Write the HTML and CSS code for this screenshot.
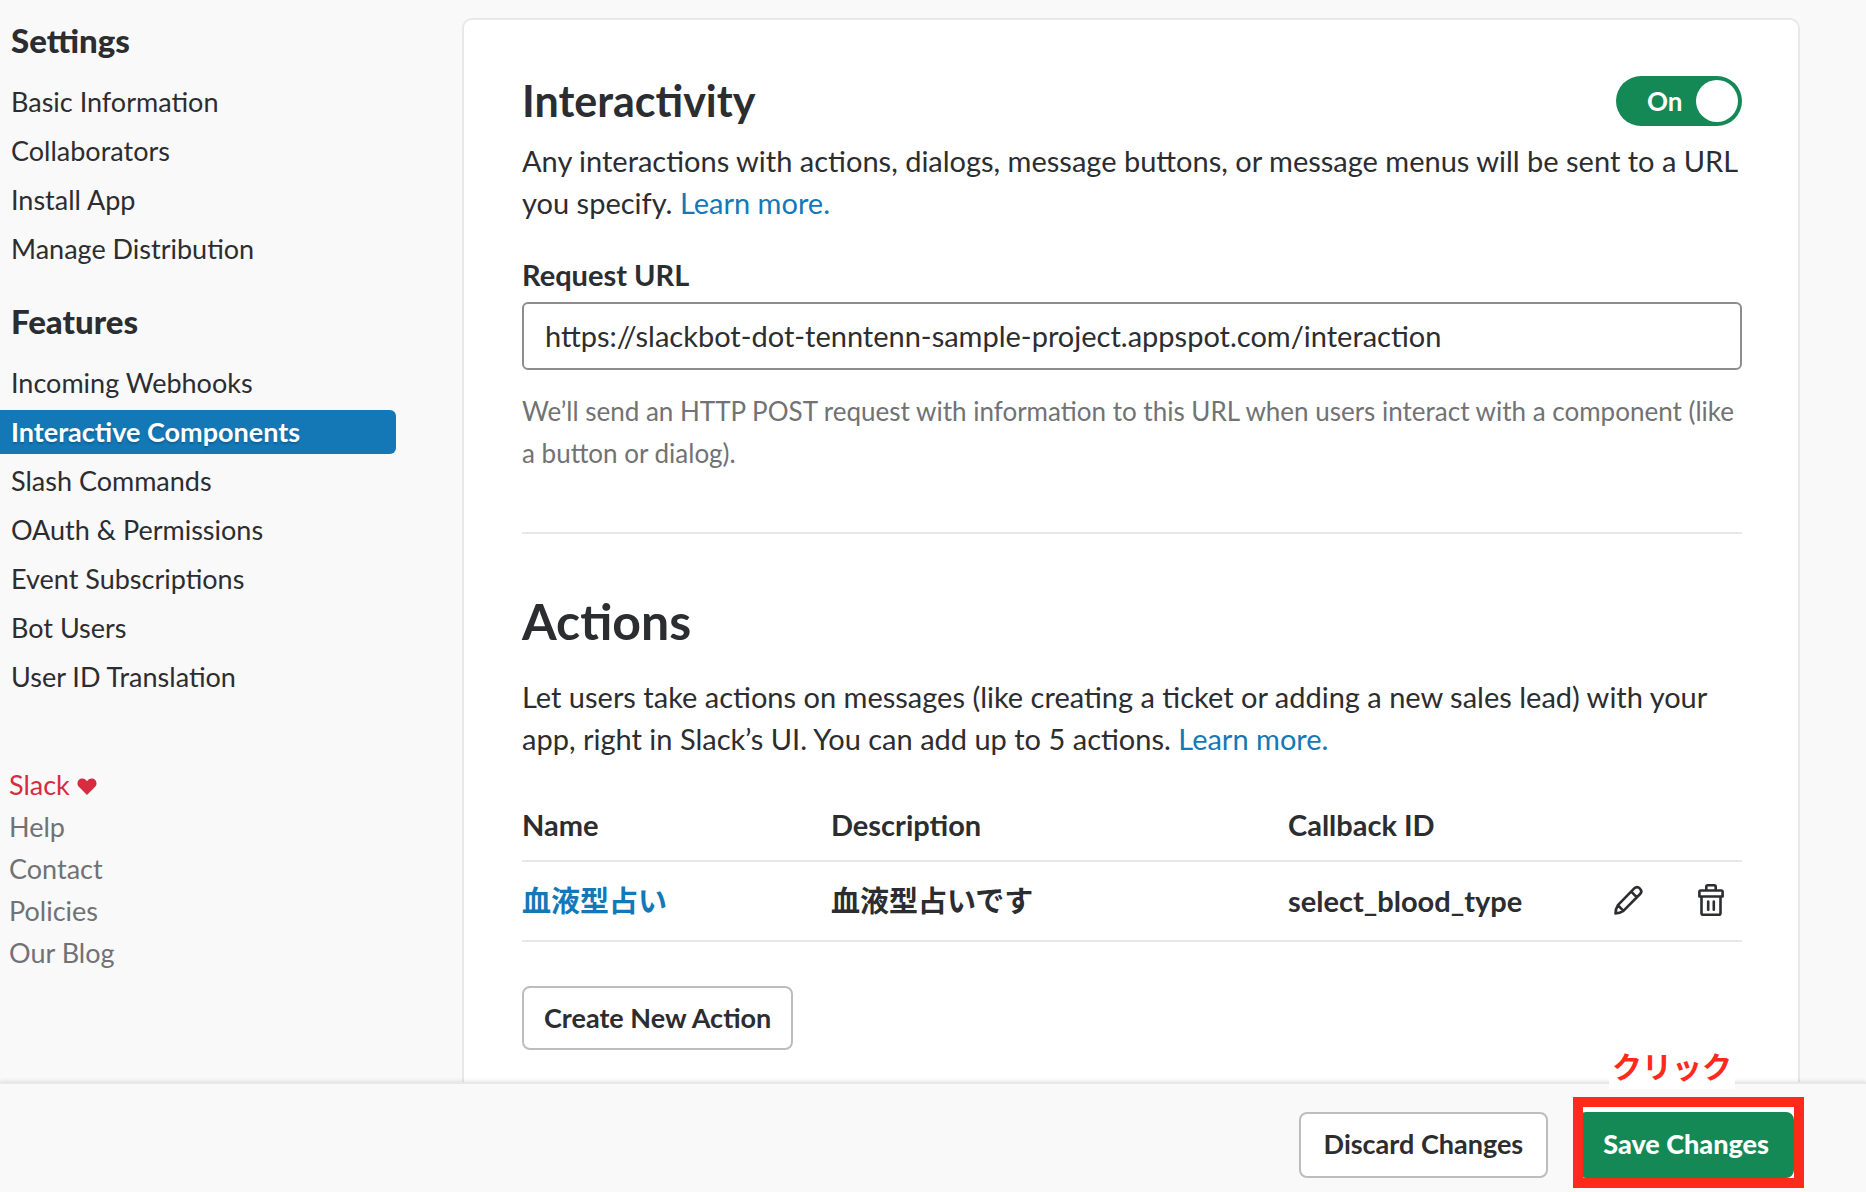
FILE: index.html
```html
<!DOCTYPE html>
<html lang="en">
<head>
<meta charset="utf-8">
<meta name="viewport" content="width=device-width, initial-scale=1">
<title>Interactive Components</title>
<link rel="stylesheet" href="styles.css">
</head>
<body>
<div class="page">
  <div class="layout">
    <aside class="sidebar">
      <nav class="nav" aria-label="App configuration">
        <h3 class="nav-title">Settings</h3>
        <ul class="nav-list">
          <li><a class="nav-link" href="#">Basic Information</a></li>
          <li><a class="nav-link" href="#">Collaborators</a></li>
          <li><a class="nav-link" href="#">Install App</a></li>
          <li><a class="nav-link" href="#">Manage Distribution</a></li>
        </ul>
        <h3 class="nav-title">Features</h3>
        <ul class="nav-list">
          <li><a class="nav-link" href="#">Incoming Webhooks</a></li>
          <li><a class="nav-link nav-link-active" href="#" aria-current="page">Interactive Components</a></li>
          <li><a class="nav-link" href="#">Slash Commands</a></li>
          <li><a class="nav-link" href="#">OAuth &amp; Permissions</a></li>
          <li><a class="nav-link" href="#">Event Subscriptions</a></li>
          <li><a class="nav-link" href="#">Bot Users</a></li>
          <li><a class="nav-link" href="#">User ID Translation</a></li>
        </ul>
      </nav>
      <ul class="side-links">
        <li><a class="side-link side-link-love" href="#">Slack
          <svg class="heart" viewBox="0 0 20 17" aria-hidden="true"><path d="M10 17 1.6 8.6A5.2 5.2 0 0 1 .5 5.5C.5 2.5 2.6.5 5.3.5 7.4.5 9 1.6 10 3.3 11 1.6 12.6.5 14.7.5c2.7 0 4.8 2 4.8 5 0 1.2-.4 2.3-1.1 3.1z"/></svg></a></li>
        <li><a class="side-link" href="#">Help</a></li>
        <li><a class="side-link" href="#">Contact</a></li>
        <li><a class="side-link" href="#">Policies</a></li>
        <li><a class="side-link" href="#">Our Blog</a></li>
      </ul>
    </aside>

    <main class="card">
      <section>
        <div class="section-head">
          <h2 class="title">Interactivity</h2>
          <label class="toggle">
            <input class="toggle-input" type="checkbox" role="switch" aria-label="Interactivity" checked>
            <span class="toggle-text">On</span>
            <span class="toggle-knob"></span>
          </label>
        </div>
        <p class="text">Any interactions with actions, dialogs, message buttons, or message menus will be sent to a URL you specify. <a class="link" href="#">Learn more.</a></p>
        <label class="field-label" for="request-url">Request URL</label>
        <input class="field" id="request-url" type="text" value="https://slackbot-dot-tenntenn-sample-project.appspot.com/interaction">
        <p class="hint">We’ll send an HTTP POST request with information to this URL when users interact with a component (like a button or dialog).</p>
      </section>

      <hr class="rule">

      <section>
        <h1 class="title title-large">Actions</h1>
        <p class="text">Let users take actions on messages (like creating a ticket or adding a new sales lead) with your app, right in Slack’s UI. You can add up to 5 actions. <a class="link" href="#">Learn more.</a></p>
        <table class="actions">
          <colgroup>
            <col class="col-name"><col class="col-desc"><col class="col-id"><col class="col-tools">
          </colgroup>
          <thead>
            <tr><th scope="col">Name</th><th scope="col">Description</th><th scope="col">Callback ID</th><th></th></tr>
          </thead>
          <tbody>
            <tr>
              <td lang="ja"><a class="link" href="#">血液型占い</a></td>
              <td lang="ja">血液型占いです</td>
              <td>select_blood_type</td>
              <td>
                <div class="tools">
                  <button class="icon-button" type="button" aria-label="Edit">
                    <svg class="icon" viewBox="0 0 36 36" aria-hidden="true"><path d="M4.5 31.400c0-3 .9-6 2.400-8.200L23.500 6.200c1.500-1.500 3.600-1.500 5 0l.6.600c1.500 1.500 1.500 3.600 0 5.200L12.400 28.900c-2.200 1.500-5 2.500-7.900 2.500zM6.900 23.200l5.500 5.700M20.300 9.700l5.600 5.600"/></svg>
                  </button>
                  <button class="icon-button" type="button" aria-label="Delete">
                    <svg class="icon" viewBox="0 0 36 36" aria-hidden="true"><path d="M8.500 14.500V31c0 1 .7 1.800 1.700 1.800h15.600c1 0 1.700-.8 1.700-1.800V14.500M7.700 8.500h20.600c.8 0 1.300.5 1.300 1.300v4.700H6.400V9.800c0-.8.500-1.300 1.300-1.300zM13.300 8.500V4.800c0-1 .6-1.500 1.500-1.500h6.400c.9 0 1.500.5 1.500 1.500v3.700M15.200 19.500v8.200M20.800 19.500v8.200"/></svg>
                  </button>
                </div>
              </td>
            </tr>
          </tbody>
        </table>
        <button class="button button-create" type="button">Create New Action</button>
      </section>
    </main>
  </div>

  <footer class="save-bar">
    <button class="button button-bar" type="button">Discard Changes</button>
    <div class="callout">
      <button class="button button-bar button-primary" type="button">Save Changes</button>
      <span class="callout-frame"></span>
      <span class="callout-label" lang="ja">クリック</span>
    </div>
  </footer>
</div>
</body>
</html>
```
FILE: styles.css
```css
* {
  box-sizing: border-box;
}

body {
  margin: 0;
  background: #f9f9f9;
  color: #2c2d30;
  font-family: Lato, "Noto Sans CJK JP", sans-serif;
  font-size: 29px;
  line-height: 42px;
}

h1, h2, h3, p, ul {
  margin: 0;
  padding: 0;
}

ul {
  list-style: none;
}

a {
  text-decoration: none;
}

button, input {
  font: inherit;
  color: inherit;
}

.page {
  display: flex;
  flex-direction: column;
  min-height: 100vh;
}

.layout {
  flex: 1;
  display: flex;
  align-items: stretch;
  padding: 18px 66px 0 0;
}

/* Sidebar */
.sidebar {
  flex: 0 0 462px;
  padding-right: 66px;
  font-size: 27px;
}

.nav-title {
  padding: 0 11px 18px;
  font-size: 33px;
  font-weight: 900;
  line-height: 44px;
}

.nav-list {
  display: flex;
  flex-direction: column;
  gap: 5px;
  margin-bottom: 28px;
}

.nav-link {
  display: block;
  padding: 0 11px;
  color: #2c2d30;
  line-height: 44px;
}

.nav-link-active {
  border-radius: 0 6px 6px 0;
  background: #1478b7;
  color: #fff;
  font-weight: 700;
  text-shadow: 0 2px 2px rgba(0, 0, 0, 0.2);
}

.side-links {
  margin-top: 65px;
  padding-left: 9px;
}

.side-link {
  color: #717274;
}

.side-link-love {
  color: #d72b3f;
}

.heart {
  width: 20px;
  height: 17px;
  fill: #d72b3f;
}

/* Main card */
.card {
  flex: 1;
  min-width: 0;
  padding: 56px 56px 32px 58px;
  border: 2px solid #e8e8e8;
  border-bottom: 0;
  border-radius: 10px 10px 0 0;
  background: #fff;
}

.section-head {
  display: flex;
  align-items: center;
  justify-content: space-between;
  margin-bottom: 14px;
}

.title {
  font-size: 43px;
  font-weight: 700;
  line-height: 48px;
}

.title-large {
  margin-bottom: 25px;
  font-size: 50px;
  line-height: 60px;
}

.link {
  color: #1478b7;
}

.field-label {
  display: block;
  margin: 30px 0 6px;
  font-weight: 700;
}

.field {
  display: block;
  width: 100%;
  height: 68px;
  padding: 0 21px 2px;
  border: 2px solid #8d8d8f;
  border-radius: 6px;
  background: #fff;
}

.hint {
  margin-top: 20px;
  color: #717274;
  font-size: 26px;
}

.rule {
  height: 2px;
  margin: 58px 0 57px;
  border: 0;
  background: #e8e8e8;
}

.toggle {
  position: relative;
  display: flex;
  align-items: center;
  justify-content: space-between;
  width: 126px;
  height: 50px;
  padding: 0 4px 0 31px;
  border-radius: 25px;
  background: #148955;
  color: #fff;
  font-size: 26px;
  font-weight: 700;
}

.toggle-input {
  position: absolute;
  inset: 0;
  margin: 0;
  opacity: 0;
}

.toggle-knob {
  width: 42px;
  height: 42px;
  border-radius: 50%;
  background: #fff;
}

.actions {
  width: 100%;
  margin-top: 44px;
  border-collapse: collapse;
  table-layout: fixed;
  font-weight: 700;
  text-align: left;
}

.actions th,
.actions td {
  padding: 0;
  border-bottom: 2px solid #e8e8e8;
}

.actions th {
  height: 56px;
  padding-bottom: 14px;
}

.actions td {
  height: 80px;
}

.col-name {
  width: 309px;
}

.col-desc {
  width: 457px;
}

.col-tools {
  width: 131px;
}

.tools {
  display: flex;
  justify-content: space-between;
  padding: 0 13px 2px 0;
}

.icon-button {
  display: flex;
  padding: 0;
  border: 0;
  background: none;
}

.icon {
  width: 36px;
  height: 36px;
  fill: none;
  stroke: #2c2d30;
  stroke-width: 2.6;
  stroke-linecap: round;
  stroke-linejoin: round;
}

.button {
  padding: 0 20px;
  border: 2px solid #bdbdbe;
  border-radius: 8px;
  background: #fff;
  font-size: 27px;
  font-weight: 700;
}

.button-create {
  height: 64px;
  margin-top: 44px;
}

/* Save bar */
.save-bar {
  position: sticky;
  bottom: 0;
  display: flex;
  justify-content: flex-end;
  gap: 30px;
  height: 110px;
  padding: 28px 72px 14px;
  border-top: 2px solid #e8e8e8;
  background: #f9f9f9;
  box-shadow: 0 -1px 4px rgba(0, 0, 0, 0.1);
}

.button-bar {
  height: 66px;
  padding: 0 23px 2px;
}

.button-primary {
  position: relative;
  border-color: #148955;
  background: #148955;
  color: #fff;
  font-weight: 900;
}

/* Click marker around the save button */
.callout {
  position: relative;
}

.callout::before {
  content: "";
  position: absolute;
  inset: -6px 0 0;
  background: #fff;
}

.callout-frame {
  position: absolute;
  inset: -15px -10px -10px -5px;
  border: 10px solid #ff2a1c;
  pointer-events: none;
}

.callout-label {
  position: absolute;
  bottom: 89px;
  right: 59px;
  padding: 0 3px 2px;
  background: #fff;
  color: #ff2a1c;
  font-size: 30px;
  font-weight: 700;
}
```
